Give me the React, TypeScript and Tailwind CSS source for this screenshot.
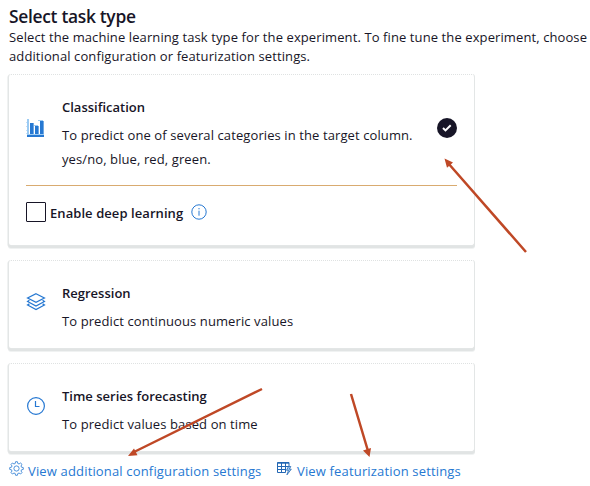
import type { ReactNode } from "react";

const cardBase =
  "flex w-[467px] flex-col rounded-[3px] border border-[#e3e6e6] [border-top-style:dotted] border-t-[#dfe2e2] bg-white pl-[17px] pr-[17px] shadow-[0_2px_0_0_#e1e4e4,0_3px_0_0_#f0f2f2,-1px_1px_0_0_#f0f2f2]";

function ChartIcon() {
  return (
    <svg width="19" height="19" viewBox="0 0 19 19" shapeRendering="crispEdges">
      <path d="M1 0h2v16H1zM12 1h5v1h-5zM8 6h4v1H8zM3 15h15v1H3z" fill="#9ccbf3" />
      <path d="M0 3h1v1H0zM0 7h1v1H0zM0 11h1v1H0zM0 14h1v1H0z" fill="#c6dff6" />
      <path d="M4 4h3v11H4zM9 7h3v8H9zM14 2h3v13h-3zM1 16h17v2H1z" fill="#2678d2" />
      <path d="M7 4h1v11H7zM12 7h1v8h-1zM17 2h1v13h-1z" fill="#71a9e2" />
    </svg>
  );
}

function LayersIcon() {
  return (
    <svg width="20" height="20" viewBox="0 0 20 20" fill="none" stroke="#2678d2" strokeWidth="1.25">
      <path d="M10 1.7 18.4 6 10 10.3 1.6 6Z" />
      <path d="M3.4 8.3 1.6 9.5 10 14l8.4-4.5-1.8-1.2" />
      <path d="M3.4 11.9 1.6 13 10 17.5l8.4-4.5-1.8-1.1" />
    </svg>
  );
}

function ClockIcon() {
  return (
    <svg width="20" height="20" viewBox="0 0 20 20" fill="none" stroke="#2678d2" strokeWidth="1.2">
      <circle cx="10" cy="10" r="8.4" />
      <path d="M9.5 5v5.5h4" />
    </svg>
  );
}

function GearIcon() {
  return (
    <svg width="15" height="15" viewBox="0 0 15 15" fill="none" stroke="#2678d2" strokeWidth="0.8">
      <path d="m6.6.7-.4 1.8-1.2.5-1.6-1L2 3.4 3 5l-.5 1.2-1.8.4v1.8l1.8.4.5 1.2-1 1.6L3.4 13l1.6-1 1.2.5.4 1.8h1.8l.4-1.8 1.2-.5 1.6 1 1.4-1.4-1-1.6.5-1.2 1.8-.4V6.6l-1.8-.4L12 5l1-1.6L11.6 2 10 3l-1.2-.5L8.4.7Z" />
      <circle cx="7.5" cy="7.5" r="2.6" />
    </svg>
  );
}

function TableIcon() {
  return (
    <svg width="15" height="15" viewBox="0 0 15 15" fill="none" stroke="#2468b4" strokeWidth="1">
      <path d="M8.5 11.5h-8v-10h11.5v4M.5 5.5h11.5M.5 8.5h8M4.5 1.5v10M8.5 1.5v10" />
      <path d="M.5 2h11.5" strokeWidth="1.4" />
      <path d="m11.4 5.5-1.9 3.8h2l-1.6 4.6 4.4-5.7h-2l1.5-2.7Z" strokeWidth=".8" fill="#a5cdf2" />
    </svg>
  );
}

function TaskText({ title, children }: { title: ReactNode; children: ReactNode }) {
  return (
    <div className="flex flex-col whitespace-nowrap">
      <h3 className="text-[13px] leading-[20px] font-semibold">{title}</h3>
      <div className="mt-[6px] text-[13px] leading-[24px] tracking-[0.1px]">{children}</div>
    </div>
  );
}

export default function App() {
  return (
    <main className="relative h-[486px] w-[590px] overflow-hidden bg-white font-['Open_Sans','Noto_Sans',sans-serif] text-[#171527]">
      <header className="pl-[9px] pt-[4px] whitespace-nowrap">
        <h1 className="text-[17.4px] leading-[24px] font-semibold tracking-[-0.3px]">Select task type</h1>
        <p className="text-[13px] leading-[19px] tracking-[0.1px]">
          Select the machine learning task type for the experiment. To fine tune the experiment, choose
          <br />
          additional configuration or featurization settings.
        </p>
      </header>

      <div className="mt-[8px] ml-[8px] flex flex-col gap-[14px]">
        <section className={`${cardBase} h-[172px]`}>
          <div className="flex h-[111px] border-b border-[#d9ab70] pt-[22px]">
            <div className="w-[36px] pt-[22px]"><ChartIcon /></div>
            <TaskText title="Classification">
              To predict one of several categories in the target column.
              <br />
              yes/no, blue, red, green.
            </TaskText>
            <div className="mt-[21px] ml-auto flex size-[20px] items-center justify-center rounded-full bg-[#171527]">
              <svg width="12" height="12" viewBox="0 0 12 12" fill="none" stroke="white" strokeWidth="2">
                <path d="m2 6 2.5 2.4L9.7 3.3" />
              </svg>
            </div>
          </div>
          <label className="mt-[15px] flex items-center">
            <span className="size-[20px] rounded-[1px] border border-[#171527]" />
            <span className="ml-[4px] pt-[2px] text-[13px] leading-[20px] font-semibold tracking-[0.07px] whitespace-nowrap">Enable deep learning</span>
            <svg className="ml-[8px]" width="16" height="16" viewBox="0 0 16 16" fill="none" stroke="#2678d2">
              <circle cx="8" cy="8" r="7.2" />
              <path d="M8 6.7v5M8 4v1.3" />
            </svg>
          </label>
        </section>

        <section className={`${cardBase} h-[89px]`}>
          <div className="flex pt-[22px]">
            <div className="w-[36px] pt-[9px]"><LayersIcon /></div>
            <TaskText title="Regression">To predict continuous numeric values</TaskText>
          </div>
        </section>

        <section className={`${cardBase} h-[89px]`}>
          <div className="flex pt-[22px]">
            <div className="w-[36px] pt-[10px]"><ClockIcon /></div>
            <TaskText title="Time series forecasting">To predict values based on time</TaskText>
          </div>
        </section>
      </div>

      <nav className="mt-[9px] ml-[9px] flex text-[13px] leading-[20px] tracking-[0.16px] whitespace-nowrap text-[#2678d2]">
        <a className="flex w-[268px] gap-[4px]"><GearIcon /><span>View additional configuration settings</span></a>
        <a className="flex gap-[5px]"><TableIcon /><span>View featurization settings</span></a>
      </nav>

      <svg className="pointer-events-none absolute inset-0" width="590" height="486" fill="#bf4826" stroke="#bf4826" strokeWidth="2.5">
        <path d="M526 252 448 163M262 389 134 452M351 394l17 57" fill="none" />
        <path d="m444.5 158.5 8.5 4-6 5.3ZM128 456l6-7.5 3.5 6.7ZM369.5 457l-6.5-6.5 8-2.5Z" stroke="none" />
      </svg>
    </main>
  );
}
